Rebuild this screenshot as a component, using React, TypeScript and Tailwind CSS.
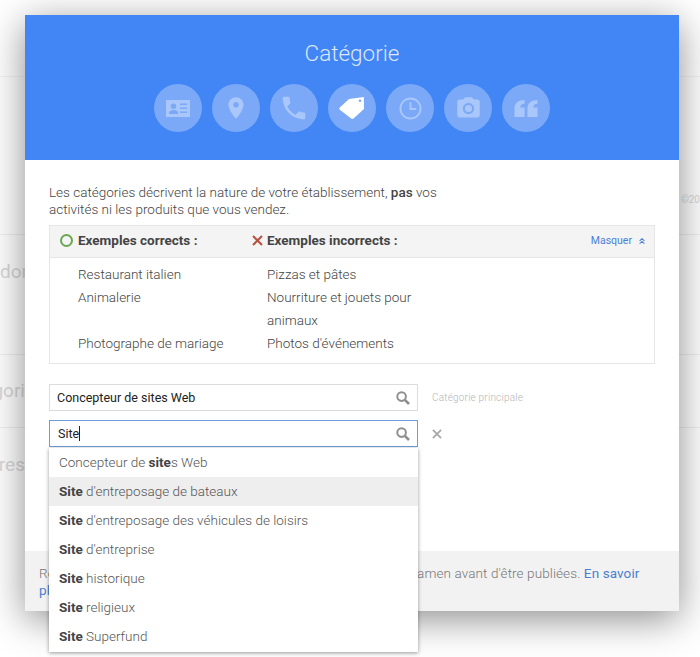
import React from "react";
import { MdPhone, MdPlace, MdPhotoCamera } from "react-icons/md";
import { LuChevronsUp } from "react-icons/lu";

const font = "font-['Roboto',sans-serif]";

function CardIcon() {
  return (
    <svg viewBox="0 0 24 17" className="h-[17px] w-[24px]" fill="currentColor">
      <path fillRule="evenodd" d="M0 0h24v17H0zM3 14h9v-1.600c0-1.600-2.800-2.500-4.500-2.500S3 10.800 3 12.400zM7.500 9a2.700 2.700 0 1 0 0-5.400 2.700 2.700 0 0 0 0 5.400zM14 3.500V5h7V3.500zM14 7.500V9h7V7.500zM14 11.500V13h7v-1.500z" />
    </svg>
  );
}

function TagIcon() {
  return (
    <svg viewBox="0 0 26 24" className="h-[24px] w-[26px]" fill="#fff">
      <path
        fillRule="evenodd"
        d="M.8 11.500 10 3 24.800 1 25 13 14.500 22.500c-.8.700-1.700.6-2.300 0L.8 13.800c-.7-.7-.7-1.600 0-2.300zM21 3.500a1.300 1.300 0 1 0 0 2.600 1.300 1.300 0 0 0 0-2.600z"
      />
    </svg>
  );
}

function ClockIcon() {
  return (
    <svg viewBox="0 0 24 24" className="h-[23px] w-[23px]" fill="none" stroke="currentColor" strokeWidth="2">
      <circle cx="12" cy="12" r="10.500" />
      <path d="M12 5.500V12.500H18" />
    </svg>
  );
}

function QuoteIcon() {
  return (
    <svg viewBox="0 0 26 18" className="h-[17px] w-[24px]" fill="currentColor" preserveAspectRatio="none">
      <path d="M11.500 0v4C8.500 4 7 5.500 6.800 8h4.700v10H.5V9C.5 3.500 4.500 0 11.500 0zM25.500 0v4c-3 0-4.500 1.500-4.700 4h4.700v10h-11V9c0-5.500 4-9 11-9z" />
    </svg>
  );
}

function SearchIcon() {
  return (
    <svg viewBox="0 0 14 14" className="h-[14px] w-[14px]" fill="none" stroke="#8f8f8f">
      <circle cx="5.600" cy="5.600" r="4.300" strokeWidth="2" />
      <path d="M8.800 8.800 13 13" strokeWidth="2.600" />
    </svg>
  );
}

function CrossIcon({ className }: { className: string }) {
  return (
    <svg viewBox="0 0 11 11" className={className} fill="none" stroke="currentColor" strokeWidth="2">
      <path d="M1 1 10 10M10 1 1 10" />
    </svg>
  );
}

const steps = [
  { key: "card", icon: <CardIcon /> },
  { key: "place", icon: <MdPlace size={26} /> },
  { key: "phone", icon: <MdPhone size={30} /> },
  { key: "tag", icon: <TagIcon /> },
  { key: "clock", icon: <ClockIcon /> },
  { key: "camera", icon: <MdPhotoCamera size={27} /> },
  { key: "quote", icon: <QuoteIcon /> },
];

const examples = [
  ["Restaurant italien", "Pizzas et pâtes"],
  ["Animalerie", "Nourriture et jouets pour animaux"],
  ["Photographe de mariage", "Photos d'événements"],
];

const suggestions = [
  { before: "Concepteur de ", bold: "site", after: "s Web" },
  { before: "", bold: "Site", after: " d'entreposage de bateaux", hover: true },
  { before: "", bold: "Site", after: " d'entreposage des véhicules de loisirs" },
  { before: "", bold: "Site", after: " d'entreprise" },
  { before: "", bold: "Site", after: " historique" },
  { before: "", bold: "Site", after: " religieux" },
  { before: "", bold: "Site", after: " Superfund" },
];

export default function App() {
  return (
    <div className={`relative h-[657px] w-[700px] overflow-hidden bg-white ${font}`}>
      {/* page behind the dialog */}
      <div className="flex h-full flex-col text-[#d9d9d9]">
        <div className="h-[77px] border-b border-[#f4f4f4]" />
        <div className="flex h-[158px] items-end justify-end border-b border-[#f0f0f0] pb-[27px] text-[10px]">
          ©20
        </div>
        <div className="flex h-[120px] border-b border-[#f0f0f0] pt-[26px] text-[19px] leading-[22px]">
          <span className="w-[25px] overflow-hidden whitespace-nowrap">don</span>
        </div>
        <div className="flex h-[73px] border-b border-[#f0f0f0] pt-[25px] text-[19px] leading-[22px]">
          <span className="flex w-[25px] justify-end overflow-hidden whitespace-nowrap">gori</span>
        </div>
        <div className="flex pt-[26px] text-[19px] leading-[22px]">
          <span className="flex w-[25px] justify-end overflow-hidden whitespace-nowrap">res</span>
        </div>
      </div>

      {/* dialog */}
      <div className="absolute left-[25px] top-[15px] flex h-[596px] w-[654px] flex-col bg-white shadow-[0_8px_36px_rgba(0,0,0,0.45)]">
        <header className="flex h-[145px] flex-col items-center bg-[#4285f4]">
          <h1 className="mt-[24px] text-[22.5px] font-light leading-[28px] text-[#dbe7fd]">Catégorie</h1>
          <div className="mt-[17px] flex gap-[10px]">
            {steps.map((s) => (
              <div
                key={s.key}
                className="flex h-[48px] w-[48px] items-center justify-center rounded-full bg-white/30 text-white/35"
              >
                {s.icon}
              </div>
            ))}
          </div>
        </header>

        <div className="relative flex-1 px-[24px] pt-[24px] text-[13.5px] font-light text-[#444]">
          <p className="w-[400px] leading-[17px]">
            Les catégories décrivent la nature de votre établissement, <span className="font-medium">pas</span> vos
            activités ni les produits que vous vendez.
          </p>

          <div className="mt-[7px] w-[606px] border border-[#e6e6e6]">
            <div className="flex h-[31px] items-center bg-[#f4f4f4] pb-[3px] pr-[7px]">
              <div className="flex w-[202px] items-center">
                <span className="ml-[10px] h-[13px] w-[13px] rounded-full border-[2.5px] border-[#6aa84f]" />
                <span className="ml-[5px] font-bold text-[#444]">Exemples corrects :</span>
              </div>
              <CrossIcon className="h-[11px] w-[11px] text-[#b9513f]" />
              <span className="ml-[4px] font-bold text-[#444]">Exemples incorrects :</span>
              <span className="ml-auto flex items-center gap-[5px] pt-[2px] text-[10.5px] font-normal text-[#4a80d8]">
                Masquer <LuChevronsUp size={10} strokeWidth={2.500} />
              </span>
            </div>
            <div className="border-t border-[#e6e6e6] pb-[8px] pt-[5px] leading-[23px]">
              {examples.map(([good, bad]) => (
                <div key={good} className="flex">
                  <span className="ml-[28px] w-[189px] shrink-0">{good}</span>
                  <span className="w-[160px]">{bad}</span>
                </div>
              ))}
            </div>
          </div>

          <div className="mt-[20px] flex items-center">
            <div className="flex h-[27px] w-[369px] items-center justify-between border border-[#dcdcdc] pl-[7px] pr-[7px] pt-px text-[12.5px] font-normal text-[#222]">
              Concepteur de sites Web
              <SearchIcon />
            </div>
            <span className="ml-[14px] text-[10px] tracking-[0.2px] text-[#b5b5b5]">Catégorie principale</span>
          </div>

          <div className="mt-[9px] flex items-center">
            <div className="relative h-[27px] w-[369px]">
              <div className="flex h-full items-center justify-between border border-[#6e9ddb] pl-[8px] pr-[7px] text-[12.5px] font-normal text-[#222]">
                <span className="border-r border-[#222] leading-[15px]">Site</span>
                <SearchIcon />
              </div>
              {/* suggestions list */}
              <ul className="absolute left-0 top-[28px] z-10 w-[369px] bg-white pb-[1px] text-[#555] shadow-[0_1px_4px_rgba(0,0,0,0.4)]">
                {suggestions.map((s) => (
                  <li
                    key={s.after + s.before}
                    className={`h-[29px] whitespace-pre pl-[10px] leading-[29px] ${s.hover ? "bg-[#eeeeee]" : ""}`}
                  >
                    {s.before}
                    <span className="font-bold text-[#444]">{s.bold}</span>
                    {s.after}
                  </li>
                ))}
              </ul>
            </div>
            <CrossIcon className="ml-[14px] h-[10px] w-[10px] text-[#a8a8a8]" />
          </div>
        </div>

        <footer className="h-[60px] bg-[#f2f2f2] pl-[14px] pr-[30px] pt-[14px] text-[13.5px] font-light leading-[17px] tracking-[0.1px] text-[#777]">
          Remarque : certaines modifications peuvent faire l'objet d'un examen avant d'être publiées.{" "}
          <span className="font-normal text-[#4a7fd0]">En savoir plus</span>
        </footer>
      </div>
    </div>
  );
}
